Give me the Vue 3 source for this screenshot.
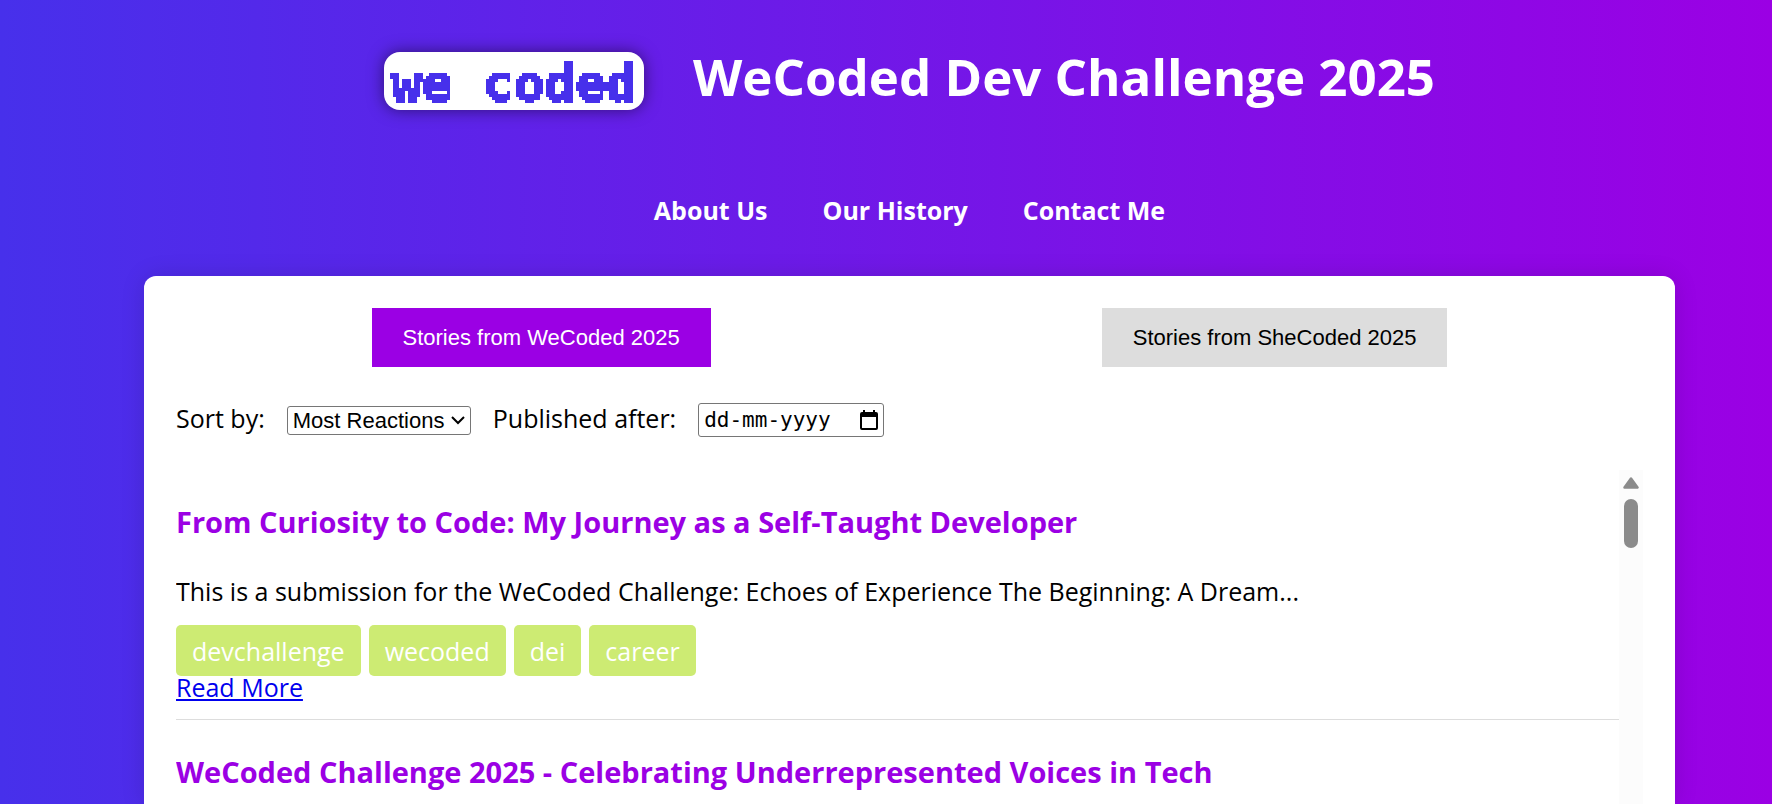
<script setup>
import { ref } from 'vue'

const links = ['About Us', 'Our History', 'Contact Me']
const tabs = ['Stories from WeCoded 2025', 'Stories from SheCoded 2025']
const active = ref(0)
const date = ref('')
const stories = [
  {
    title: 'From Curiosity to Code: My Journey as a Self-Taught Developer',
    text: 'This is a submission for the WeCoded Challenge: Echoes of Experience The Beginning: A Dream...',
    tags: ['devchallenge', 'wecoded', 'dei', 'career'],
  },
  {
    title: 'WeCoded Challenge 2025 - Celebrating Underrepresented Voices in Tech',
    text: '',
    tags: [],
  },
]
</script>

<template>
  <div class="page">
    <header class="header">
      <div class="logo"><span>we coded</span></div>
      <h1>WeCoded Dev Challenge 2025</h1>
    </header>
    <nav class="nav">
      <a v-for="l in links" :key="l" href="#">{{ l }}</a>
    </nav>
    <main class="card">
      <div class="tabs">
        <button
          v-for="(t, i) in tabs"
          :key="t"
          type="button"
          :class="{ active: active === i }"
          @click="active = i"
        >{{ t }}</button>
      </div>
      <div class="filters">
        <label for="sort">Sort by:</label>
        <div class="select">
          <select id="sort">
            <option>Most Reactions</option>
          </select>
          <svg width="14" height="9" viewBox="0 0 14 9" aria-hidden="true">
            <path d="M1 1l6 6 6-6" fill="none" stroke="#000" stroke-width="2" />
          </svg>
        </div>
        <label for="after">Published after:</label>
        <div class="date">
          <input id="after" v-model="date" type="text" placeholder="dd-mm-yyyy" />
          <svg width="18" height="20" viewBox="0 0 18 20" aria-hidden="true">
            <path
              d="M3 0h2v2h8V0h2v2h1a2 2 0 0 1 2 2v14a2 2 0 0 1-2 2H2a2 2 0 0 1-2-2V4a2 2 0 0 1 2-2h1zM2 7v11h14V7z"
              fill="#000"
              fill-rule="evenodd"
            />
          </svg>
        </div>
      </div>
      <div class="feed">
        <div class="list">
          <article v-for="s in stories" :key="s.title" class="story">
            <h3>{{ s.title }}</h3>
            <p v-if="s.text">{{ s.text }}</p>
            <div v-if="s.tags.length" class="tags">
              <span v-for="t in s.tags" :key="t">{{ t }}</span>
            </div>
            <a v-if="s.text" href="#" class="more">Read More</a>
          </article>
        </div>
        <div class="scrollbar" aria-hidden="true">
          <svg width="16" height="12" viewBox="0 0 16 12">
            <path d="M8 1.5L14.5 10.5H1.5z" fill="#8b8b8b" stroke="#8b8b8b" stroke-width="2.5" stroke-linejoin="round" />
          </svg>
          <div class="thumb"></div>
        </div>
      </div>
    </main>
    <!-- Samples one point per 3x3 cell and grows it to fill the cell -->
    <svg class="defs" width="0" height="0" aria-hidden="true">
      <filter id="pixelate" filterUnits="userSpaceOnUse" x="0" y="0" width="270" height="64" color-interpolation-filters="sRGB">
        <feFlood x="1" y="1" width="1" height="1" flood-color="#000" result="dot" />
        <feOffset in="dot" x="0" y="0" width="3" height="3" result="cell" />
        <feTile in="cell" result="grid" />
        <feComposite in="SourceGraphic" in2="grid" operator="in" />
        <feMorphology operator="dilate" radius="1" />
        <feComponentTransfer>
          <feFuncA type="discrete" tableValues="0 1" />
        </feComponentTransfer>
      </filter>
    </svg>
  </div>
</template>

<style>
body {
  margin: 0;
}
</style>

<style scoped>
.page {
  box-sizing: border-box;
  display: flex;
  flex-direction: column;
  height: 100vh;
  overflow: hidden;
  padding: 0 97px 0 144px;
  background: linear-gradient(to right, #4730eb, #9b00e4);
  font-family: "Open Sans", sans-serif;
  font-size: 25px;
  line-height: 34px;
  color: #000;
}
.header {
  display: flex;
  justify-content: center;
  align-items: flex-start;
  gap: 49px;
  padding-top: 42px;
}
.logo {
  box-sizing: border-box;
  margin-top: 10px;
  width: 260px;
  height: 58px;
  border-radius: 16px;
  background: #fff;
  box-shadow: 0 0 16px rgba(0, 0, 0, 0.5);
  color: #4730eb;
  font: bold 51px/64px "DejaVu Sans Mono", monospace;
  text-align: center;
  white-space: nowrap;
}
.logo span {
  display: block;
  -webkit-text-stroke: 2px #4730eb;
  filter: url(#pixelate);
}
h1 {
  margin: 0;
  color: #fff;
  font-size: 51px;
  line-height: 68px;
  font-weight: 700;
}
.nav {
  display: flex;
  justify-content: center;
  gap: 55px;
  margin-top: 83px;
}
.nav a {
  color: #fff;
  font-weight: 700;
  text-decoration: none;
}
.card {
  flex: 1;
  min-height: 0;
  display: flex;
  flex-direction: column;
  margin-top: 49px;
  padding: 32px 32px 0;
  border-radius: 12px 12px 0 0;
  background: #fff;
  box-shadow: 0 0 24px rgba(0, 0, 0, 0.12);
}
.tabs {
  display: flex;
  justify-content: space-around;
}
.tabs button {
  padding: 17px 31px;
  border: 0;
  background: #ddd;
  color: #000;
  font: 22px/25px "Liberation Sans", Arial, sans-serif;
}
.tabs button.active {
  background: #9b00e4;
  color: #fff;
}
.filters {
  display: flex;
  align-items: center;
  gap: 22px;
  margin-top: 36px;
}
.filters label {
  padding-bottom: 3px;
  line-height: 31px;
}
.select,
.date {
  position: relative;
  display: flex;
  align-items: center;
}
.select svg,
.date svg {
  position: absolute;
  right: 6px;
  pointer-events: none;
}
select,
input {
  box-sizing: border-box;
  appearance: none;
  margin: 0;
  border: 1px solid #767676;
  border-radius: 3px;
  background: #fff;
  color: #000;
}
select {
  width: 184px;
  height: 29px;
  padding: 0 0 0 5px;
  font: 22px/25px "Liberation Sans", Arial, sans-serif;
}
input {
  width: 186px;
  height: 34px;
  padding: 0 0 0 5px;
  font: 21px/30px "DejaVu Sans Mono", monospace;
}
input::placeholder {
  color: #000;
  opacity: 1;
}
.feed {
  flex: 1;
  min-height: 0;
  display: flex;
  margin-top: 33px;
}
.list {
  flex: 1;
  min-width: 0;
  overflow: hidden;
}
.story {
  overflow: hidden;
  padding-bottom: 21px;
  border-bottom: 1px solid #ddd;
}
h3 {
  margin: 33px 0;
  color: #9b00e4;
  font-size: 29px;
  line-height: 38px;
  font-weight: 700;
}
p {
  margin: 0 0 17px;
}
.tags {
  display: flex;
  gap: 8px;
}
.tags span {
  padding: 9px 16px 8px;
  border-radius: 5px;
  background: #cdeb73;
  color: #fff;
}
.more {
  display: block;
  width: max-content;
  line-height: 22px;
  color: #00e;
}
.scrollbar {
  display: flex;
  flex-direction: column;
  align-items: center;
  gap: 10px;
  width: 24px;
  padding-top: 7px;
  background: #fcfcfc;
}
.thumb {
  width: 14px;
  height: 49px;
  border-radius: 7px;
  background: #8b8b8b;
}
.defs {
  position: absolute;
}
</style>
